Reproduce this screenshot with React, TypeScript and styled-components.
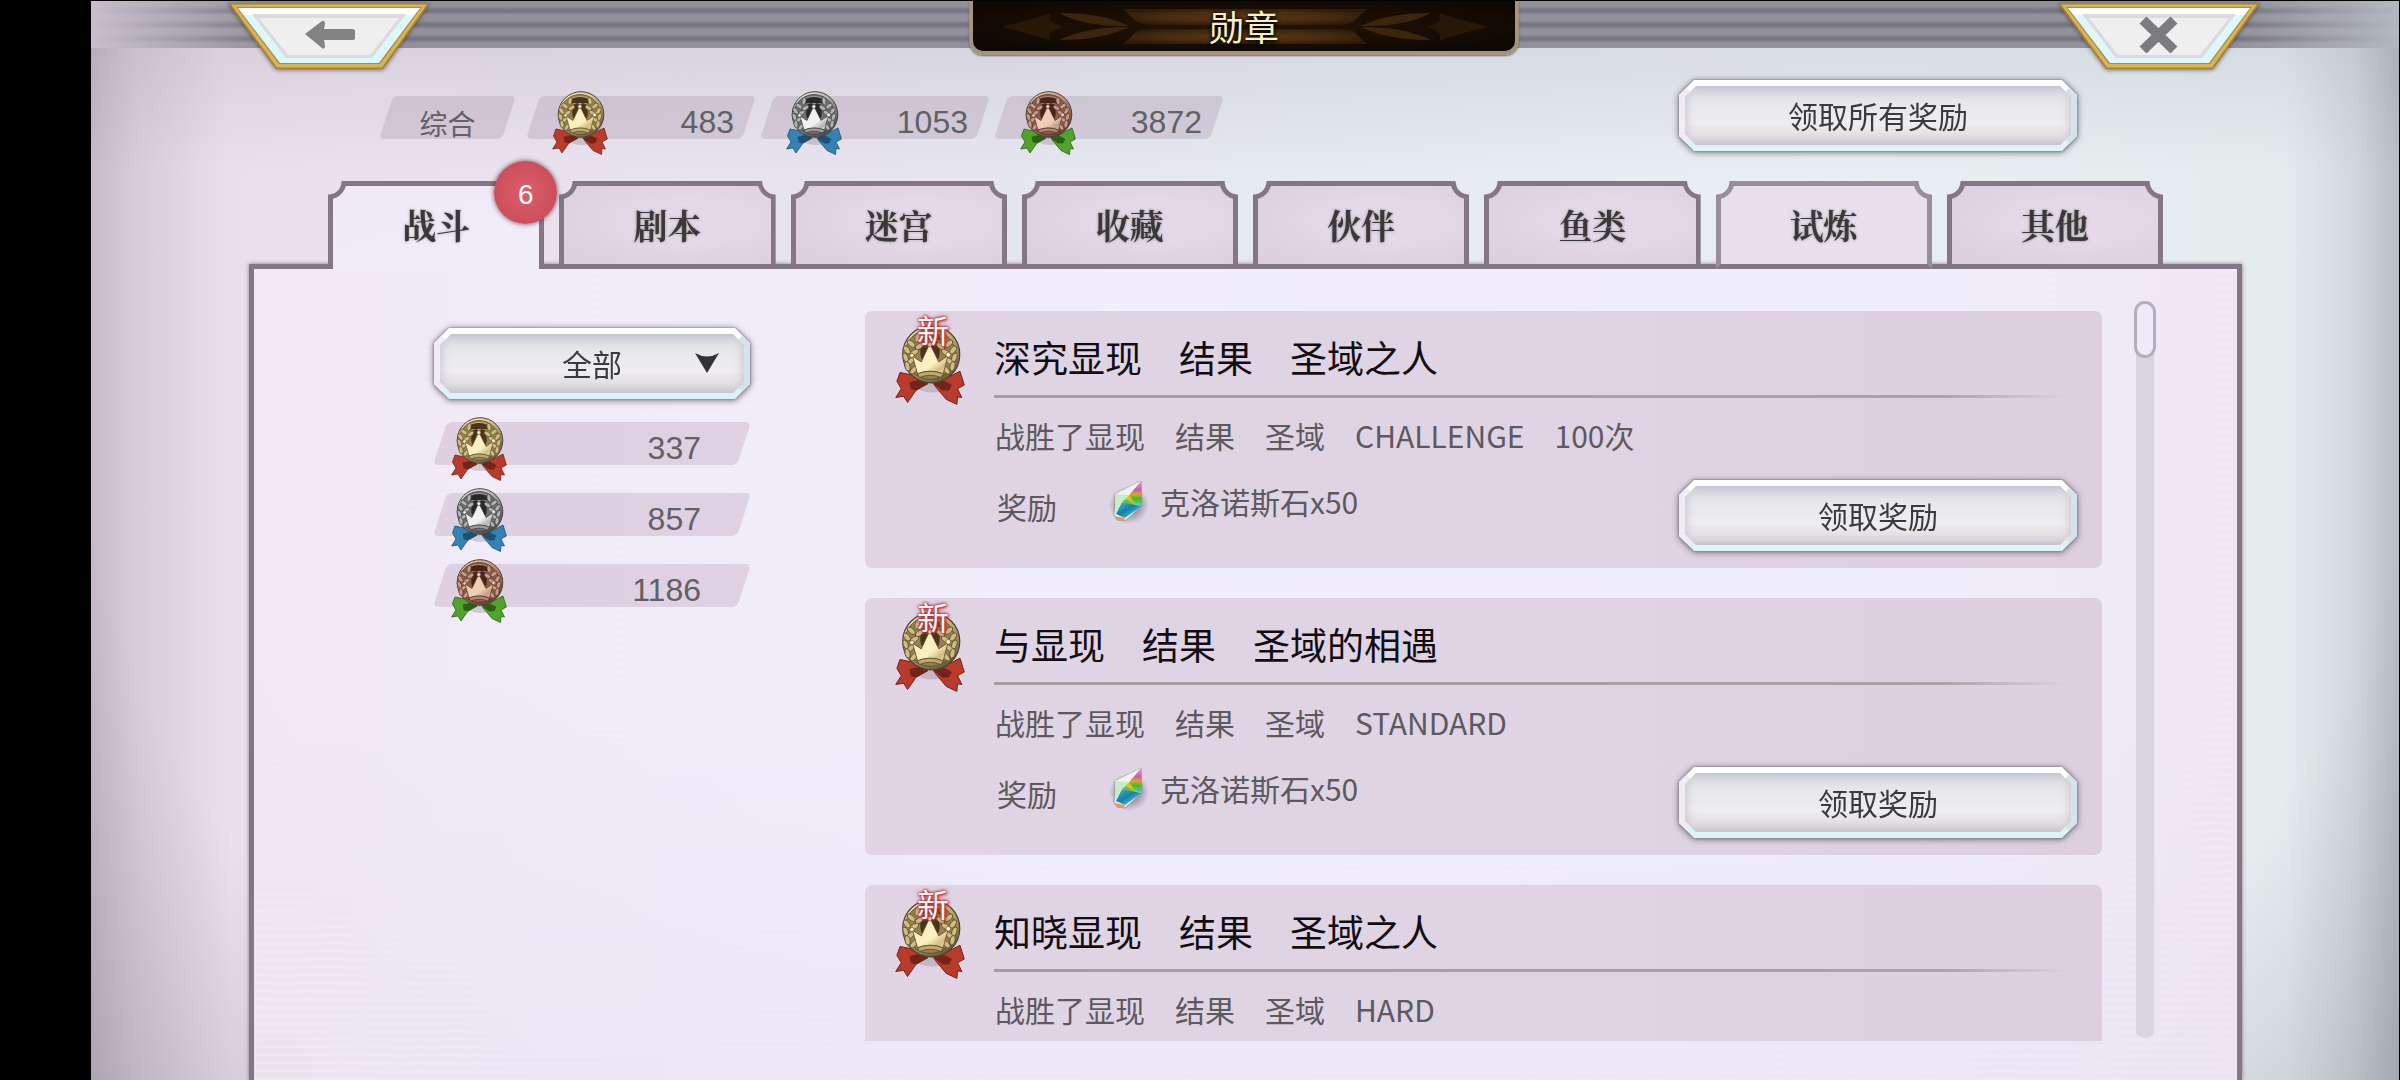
import React, { useState } from "react";
import styled, { createGlobalStyle, css } from "styled-components";

const sans = `"Noto Sans CJK SC", "Noto Sans", sans-serif`;
const digits = `"Liberation Sans", "Noto Sans CJK SC", sans-serif`;
const serif = `"Noto Serif CJK SC", "Noto Sans CJK SC", serif`;

const line = "#857686";

const GlobalStyle = createGlobalStyle`
  * { box-sizing: border-box; }
  html, body, #root { height: 100%; margin: 0; }
  body { background: #000; overflow: hidden; font-family: ${sans}; }
  button, select { font: inherit; border: 0; padding: 0; margin: 0; background: none; color: inherit; cursor: pointer; }
  ul, h1, h2, p { margin: 0; padding: 0; list-style: none; font-weight: 400; }
`;

const Screen = styled.div`
  height: 100%;
  padding: 1px 1px 0 91px;
  background: #000;
`;

const Stage = styled.div`
  height: 100%;
  display: flex;
  flex-direction: column;
  background:
    linear-gradient(90deg, rgba(90, 76, 100, 0.24) 0%, rgba(90, 76, 100, 0.12) 2%, transparent 6%, transparent 95%, rgba(80, 86, 100, 0.12) 98%, rgba(80, 84, 100, 0.3) 100%),
    radial-gradient(ellipse 62% 110% at 50% 32%, transparent 82%, rgba(78, 72, 92, 0.3) 112%),
    linear-gradient(180deg, rgba(150, 148, 160, 0.2) 40px, transparent 170px),
    linear-gradient(90deg, #e8dde9 0%, #ebe1ed 10%, #e7e4ef 34%, #e5eaf1 52%, #e8eff2 76%, #e4ebed 100%);
`;

const TopBar = styled.header`
  flex: none;
  height: 47px;
  padding: 0 139px 0 137px;
  display: grid;
  grid-template-columns: 1fr auto 1fr;
  align-items: start;
  background:
    linear-gradient(90deg, rgba(203, 193, 207, 0.95) 0, rgba(203, 193, 207, 0) 8%, rgba(190, 195, 203, 0) 93%, rgba(180, 186, 196, 0.95) 100%),
    repeating-linear-gradient(180deg, #93919c 0, #93919c 5px, #777682 9px, #777682 11px, #93919c 14px);
`;

const NavButton = styled.button<{ $end?: boolean }>`
  justify-self: ${(p) => (p.$end ? "end" : "start")};
  margin-top: 1px;
  height: 70px;
  svg { display: block; filter: drop-shadow(0 1px 2px rgba(60, 55, 60, 0.7)); }
`;

const TitlePlaque = styled.div`
  position: relative;
  width: 550px;
  height: 54px;
  border: 4px solid #a59580;
  border-top: 0;
  border-radius: 0 0 14px 14px;
  background: radial-gradient(ellipse at center, #241405 0%, #120a03 70%, #0b0602 100%);
  box-shadow: 0 1px 2px rgba(70, 60, 60, 0.7);
  svg { position: absolute; inset: 0; width: 100%; height: 100%; }
`;

const Title = styled.h1`
  position: relative;
  text-align: center;
  font-size: 35px;
  line-height: 49px;
  color: #f7f0c4;
  text-shadow: 0 0 4px #000, 0 3px 4px #000;
`;

const SummaryRow = styled.div`
  flex: none;
  display: flex;
  align-items: flex-start;
  padding: 31px 321px 0 288px;
  height: 133px;
`;

const ChipGroup = styled.ul`
  display: flex;
  gap: 4px;
  margin: 17px auto 0 10px;
`;

const Chip = styled.li<{ $wide?: boolean }>`
  position: relative;
  z-index: 0;
  height: 43px;
  width: ${(p) => (p.$wide ? "100%" : "230px")};
  padding: 0 ${(p) => (p.$wide ? "50px" : "22px")} 0 ${(p) => (p.$wide ? "18px" : "26px")};
  display: flex;
  justify-content: space-between;
  font: 32px/52px ${digits};
  color: #616064;
  &::before {
    content: "";
    position: absolute;
    z-index: -1;
    inset: 0 7px;
    border-radius: 5px;
    transform: skewX(-18deg);
    background: ${(p) => (p.$wide ? "rgba(200, 178, 200, 0.45)" : "rgba(182, 162, 186, 0.4)")};
  }
  svg { display: block; margin-top: -5px; }
`;

const ChipLabel = styled(Chip).attrs({ as: "h2" })`
  width: 137px;
  margin-top: 17px;
  padding: 0;
  justify-content: center;
  font: 28px/54px ${sans};
`;

const bevel = css`
  position: relative;
  z-index: 0;
  height: 73px;
  filter: drop-shadow(0 0 1px #77727c) drop-shadow(0 1px 3px rgba(90, 82, 95, 0.8));
  font: 30px/73px ${sans};
  color: #3b3b3d;
  --cut: 15px;
  &::before, &::after {
    content: "";
    position: absolute;
    z-index: -1;
    clip-path: polygon(var(--cut) 0, calc(100% - var(--cut)) 0, 100% var(--cut), 100% calc(100% - var(--cut)), calc(100% - var(--cut)) 100%, var(--cut) 100%, 0 calc(100% - var(--cut)), 0 var(--cut));
  }
  &::before {
    inset: 1px;
    border: 15px solid;
    border-color: #fff #d6e4ea #dcf3f7 #f2edf5;
  }
  &::after {
    --cut: 11px;
    inset: 7px;
    background: linear-gradient(180deg, #d3d6df 0%, #e8e8eb 28%, #eeedef 65%, #e2dce2 88%, #dad2da 100%);
    box-shadow: inset 0 0 8px 2px rgba(165, 160, 175, 0.45);
  }
`;

const BevelButton = styled.button`
  ${bevel}
  flex: none;
  width: 400px;
  margin-left: auto;
`;

const FilterBox = styled.label`
  ${bevel}
  display: block;
  select {
    appearance: none;
    display: block;
    width: 100%;
    height: 73px;
    text-align: center;
    text-align-last: center;
    outline: 0;
  }
  svg { position: absolute; right: 32px; top: 26px; pointer-events: none; }
`;

const TabList = styled.div`
  flex: none;
  display: flex;
  gap: 15px;
  padding: 0 79px;
  margin: 0 157px -5px 158px;
  position: relative;
  z-index: 1;
`;

const TabSlot = styled.div`
  flex: 1;
  position: relative;
`;

const Tab = styled.button<{ $active?: boolean; $soft?: boolean }>`
  --edge: ${(p) => (p.$soft ? "#998c9b" : line)};
  --corner: transparent 13px, var(--edge) 14px, var(--edge) 18px, transparent 19px;
  display: block;
  width: 100%;
  height: 88px;
  border: 5px solid var(--edge);
  border-bottom-color: ${line};
  ${(p) => p.$active && css`border-bottom: 0; padding-bottom: 5px;`}
  background:
    radial-gradient(circle at 0 0, var(--corner)) border-box,
    radial-gradient(circle at 100% 0, var(--corner)) border-box,
    ${(p) =>
      p.$active
        ? "linear-gradient(160deg, #f0e9f6, #f1edfb)"
        : p.$soft
        ? "#e7dfec"
        : "radial-gradient(ellipse at 60% 45%, #e3d9e8 30%, #dccddd 100%)"} padding-box;
  mask:
    radial-gradient(circle at 0 0, transparent 13px, #000 14px) 0 0 / 51% 100% no-repeat,
    radial-gradient(circle at 100% 0, transparent 13px, #000 14px) 100% 0 / 51% 100% no-repeat;
  font: 700 34px/78px ${serif};
  color: #3a383a;
  text-shadow: 0 0 3px rgba(95, 95, 80, 0.6);
`;

const Badge = styled.span`
  position: absolute;
  z-index: 1;
  top: -20px;
  right: -13px;
  width: 63px;
  height: 63px;
  border-radius: 50%;
  background: radial-gradient(circle, #dc5f6b 0%, #d0505e 60%, #bb4554 100%);
  box-shadow: 0 0 5px rgba(80, 40, 50, 0.85);
  color: #fff;
  text-align: center;
  font: 28px/67px ${digits};
`;

const Panel = styled.main`
  flex: 1;
  min-height: 0;
  margin: 0 157px 0 158px;
  padding: 32px 81px 39px 179px;
  display: flex;
  border: 5px solid ${line};
  border-bottom: 0;
  background:
    repeating-linear-gradient(180deg, rgba(255, 255, 255, 0.1) 0 4px, transparent 4px 8px),
    linear-gradient(180deg, transparent 50%, rgba(220, 215, 235, 0.25)),
    linear-gradient(90deg, #f0e8f1 0%, #f0eaf8 14%, #f2edfc 45%, #f0ecfb 85%, #efe6f2 100%);
  box-shadow: 0 0 4px rgba(110, 98, 115, 0.8);
`;

const Sidebar = styled.aside`
  flex: none;
  width: 318px;
  padding-top: 26px;
  margin-right: 114px;
`;

const CountList = styled.ul`
  display: grid;
  gap: 28px;
  margin-top: 22px;
`;

const CardList = styled.ul`
  flex: 1;
  min-width: 0;
  padding-top: 10px;
  overflow: hidden;
`;

const Card = styled.li`
  display: flex;
  gap: 29px;
  height: 257px;
  margin-bottom: 30px;
  padding: 0 24px 0 30px;
  border-radius: 7px;
  background: linear-gradient(90deg, #e0d4e5, #dfd4e3 60%, #dcd0e0);
`;

const CardMedal = styled.div`
  position: relative;
  flex: none;
  width: 70px;
  padding-top: 14px;
  svg { display: block; }
`;

const NewMark = styled.span`
  position: absolute;
  top: 0;
  left: 22px;
  font-size: 32px;
  line-height: 36px;
  color: #fff3f0;
  text-shadow: 0 0 2px #b5303a, 0 0 3px #b5303a, 1px 1px 3px #b5303a, 0 0 5px #c8505a;
`;

const CardBody = styled.div`
  flex: 1;
  min-width: 0;
`;

const CardTitle = styled.h2`
  padding-top: 8px;
  font-size: 37px;
  line-height: 76px;
  color: #120d12;
  white-space: pre;
`;

const Divider = styled.div`
  height: 3px;
  margin-right: 12px;
  background: linear-gradient(90deg, #a79da2 0%, #aaa0a6 88%, transparent 100%);
`;

const CardText = styled.p`
  margin-top: 16px;
  padding-left: 1px;
  font-size: 30px;
  line-height: 42px;
  color: #5d5960;
  white-space: pre;
`;

const Reward = styled.div`
  display: flex;
  align-items: flex-start;
  margin-top: 23px;
  font-size: 30px;
  line-height: 54px;
  color: #5d5960;
`;

const RewardLabel = styled.span`
  width: 116px;
  padding-left: 3px;
`;

const RewardItem = styled.span`
  display: flex;
  align-items: center;
  gap: 14px;
  line-height: 44px;
`;

const ScrollTrack = styled.div`
  flex: none;
  width: 22px;
  margin: 0 0 3px 32px;
  background: linear-gradient(#d8d5e0, #d8d5e0) center / 18px 100% no-repeat;
  border-radius: 11px;
`;

const ScrollThumb = styled.div`
  height: 57px;
  border: 3px solid #b3aebb;
  border-radius: 11px;
  background: #eeeafa;
`;

type Tone = "gold" | "silver" | "bronze";

type Palette = { hi: string; base: string; inner: string; low: string; dark: string; leaf: string; ribbon: string; fold: string };

const tones: Record<Tone, Palette> = {
  gold: { hi: "#fdf0c0", base: "#bfa970", inner: "#988150", low: "#5f5030", dark: "#49331a", leaf: "#cfbd82", ribbon: "#b83b2b", fold: "#74231a" },
  silver: { hi: "#f2f2f2", base: "#9b9b9b", inner: "#6f6f71", low: "#3f3f41", dark: "#29292b", leaf: "#b4b4b6", ribbon: "#3482b6", fold: "#1d5072" },
  bronze: { hi: "#f1cdb8", base: "#b38570", inner: "#8d5d4c", low: "#55352a", dark: "#47251b", leaf: "#c89b87", ribbon: "#52a32c", fold: "#2b6115" },
};

const leaves: [number, number, number][] = [
  [18, 10, 10], [13, 15, -50], [19.5, 17, 55], [9.5, 20, -35], [15.5, 22, 60], [8.5, 26, -20],
  [12.5, 29, 50], [10, 33, -10], [15, 36, 40],
];

function Medal({ tone, width }: { tone: Tone; width: number }) {
  const t = tones[tone];
  const id = `medal-${tone}`;
  return (
    <svg width={width} height={Math.round((width * 64) / 56)} viewBox="0 0 56 64" aria-hidden="true">
      <defs>
        <linearGradient id={id} x1="0.2" y1="0" x2="0.8" y2="1">
          <stop offset="0" stopColor={t.hi} />
          <stop offset="0.45" stopColor={t.base} />
          <stop offset="1" stopColor={t.low} />
        </linearGradient>
        <linearGradient id={`${id}-crown`} x1="0" y1="0" x2="1" y2="1">
          <stop offset="0" stopColor={t.hi} />
          <stop offset="0.6" stopColor={t.hi} />
          <stop offset="0.8" stopColor={t.leaf} />
          <stop offset="1" stopColor={t.hi} />
        </linearGradient>
      </defs>
      <ellipse cx="30" cy="48" rx="14" ry="6" fill="#5a5060" opacity="0.22" />
      <g stroke={t.fold} strokeWidth="0.8" strokeLinejoin="round">
        <path d="M4 38 14 40 26 47 17 52 10 62 7 57 0.6 58 5 51 1.5 45Z" fill={t.ribbon} />
        <path d="M31 47 42 42 52 37 55.4 48 50 51 53.5 58 50 57.5 49.5 63.5 41 59.5 33 50Z" fill={t.ribbon} />
        <path d="M12 46 21 44 26 47 17 52 13 51Z M31 47 37 44 45 48 43 52 38 52Z" fill={t.fold} />
      </g>
      <circle cx="29" cy="23.5" r="22.8" fill={`url(#${id})`} stroke="#4a4238" strokeWidth="1" />
      <circle cx="28" cy="23.5" r="20" fill={t.inner} stroke={t.low} strokeWidth="0.8" />
      <path d="M15 9Q28 1 41 9L38 13H18Z" fill={t.base} />
      <path d="M19 8Q28 4 37 8L38 13 33 12H23L18 13Z" fill={t.dark} />
      <path d="M22 13Q19 20 21 27H35Q37 20 34 13L30 12 28 16 26 12Z" fill={t.dark} />
      <g fill={t.leaf} stroke={t.low} strokeWidth="0.7">
        {leaves.map(([x, y, a]) => (
          <ellipse key={`${x}-${y}`} cx={x} cy={y} rx="2" ry="3.8" transform={`rotate(${a} ${x} ${y})`} />
        ))}
        {leaves.map(([x, y, a]) => (
          <ellipse key={`${x}-${y}`} cx={56 - x} cy={y} rx="2" ry="3.8" transform={`rotate(${-a} ${56 - x} ${y})`} />
        ))}
      </g>
      <path
        d="M14 25 21 29.500 26.800 17 28.800 17 35 29.500 42.500 24.500 38.500 39Q28 35 18 39Z"
        fill={`url(#${id}-crown)`}
        stroke={t.low}
        strokeWidth="0.7"
      />
      <path d="M18 39Q28 35 38.500 39L37 42Q28 38.500 19.500 42Z" fill={t.base} stroke={t.low} strokeWidth="0.7" />
      <g fill={t.hi} stroke={t.low} strokeWidth="0.5">
        <circle cx="27.8" cy="15.6" r="1.9" />
        <circle cx="13.5" cy="24.4" r="1.7" />
        <circle cx="42.6" cy="23.8" r="1.9" />
      </g>
    </svg>
  );
}

const GemDrawing = styled.svg`
  overflow: visible;
`;

function Gem() {
  return (
    <GemDrawing width="36" height="42" viewBox="0 0 32 42" aria-hidden="true">
      <defs>
        <radialGradient id="gem-glow">
          <stop offset="0.5" stopColor="#5a5568" stopOpacity="0.5" />
          <stop offset="1" stopColor="#5a5568" stopOpacity="0" />
        </radialGradient>
        <linearGradient id="gem-right" x1="0" y1="0" x2="0" y2="1">
          <stop offset="0" stopColor="#f09be0" />
          <stop offset="0.35" stopColor="#cf5cae" />
          <stop offset="0.52" stopColor="#e3a030" />
          <stop offset="0.7" stopColor="#3fc022" />
          <stop offset="1" stopColor="#4fd0b0" />
        </linearGradient>
        <linearGradient id="gem-low" x1="0" y1="0" x2="1" y2="1">
          <stop offset="0" stopColor="#4fc0b8" />
          <stop offset="0.45" stopColor="#147fa8" />
          <stop offset="1" stopColor="#8fe4ea" />
        </linearGradient>
      </defs>
      <ellipse cx="17" cy="25" rx="20" ry="19" fill="url(#gem-glow)" />
      <path d="M3 14 29 1 30 26 13 41 5 40 2 35Z" fill="#dff5ee" stroke="#8c8794" strokeWidth="0.8" />
      <path d="M29 1 30 26 22 24 17 15Z" fill="url(#gem-right)" />
      <path d="M17 15 24 25 10 22Z" fill="#d9c02c" />
      <path d="M14 19 24 25 10 22Z" fill="#62c440" />
      <path d="M10 22 24 25 30 26 13 38 4 34Z" fill="url(#gem-low)" />
      <path d="M3 14 17 15 10 22 3 33Z" fill="#c9ecc8" />
      <path d="M3 14 29 1 17 15Z" fill="#f1f3ee" />
      <path d="M3 36 13 38 12 41 5 40Z" fill="#e39a6a" />
    </GemDrawing>
  );
}

function NavShape({ children }: { children: React.ReactNode }) {
  return (
    <svg width="202" height="68" viewBox="0 0 202 68" aria-hidden="true">
      <path d="M0 0H202L155 66H48Z" fill="#a9822f" />
      <path d="M3 1.500H199L154 64.500H49Z" fill="#d6b45c" />
      <path d="M8 4H194L152 61H51Z" fill="#b08a38" />
      <path d="M10 5H192L151 60H52Z" fill="#dcf8fb" />
      <path d="M10 5H192L186 12H16Z" fill="#fff" />
      <path d="M24 11H178L144 55H58Z" fill="#dcdadf" />
      <path d="M31 15H171L142 52H60Z" fill="#efeff0" />
      {children}
    </svg>
  );
}

function PlaqueMotif() {
  return (
    <svg viewBox="0 0 542 50" preserveAspectRatio="none" aria-hidden="true">
      <defs>
        <radialGradient id="plaque-glow" cx="0.5" cy="0.5" r="0.6">
          <stop offset="0" stopColor="#5c3a16" />
          <stop offset="0.6" stopColor="#452a0f" />
          <stop offset="1" stopColor="#2c1908" />
        </radialGradient>
      </defs>
      <g fill="url(#plaque-glow)">
        <path d="M150 8H394L380 21Q374 24 368 24H176Q170 24 164 21Z" />
        <path d="M150 43H394L380 30Q374 28 368 28H176Q170 28 164 30Z" />
      </g>
      <g fill="#3d250d">
        <path d="M86 12Q130 12 156 25Q112 26 86 12Z M86 39Q130 39 156 26Q112 26 86 39Z" />
        <path d="M458 12Q414 12 388 25Q432 26 458 12Z M458 39Q414 39 388 26Q432 26 458 39Z" />
      </g>
      <g fill="#271707">
        <path d="M28 26Q60 18 78 12Q72 22 92 26Q72 30 78 40Q60 33 28 26Z" />
        <path d="M516 26Q484 18 466 12Q472 22 452 26Q472 30 466 40Q484 33 516 26Z" />
      </g>
    </svg>
  );
}

const totals: [Tone, number][] = [["gold", 483], ["silver", 1053], ["bronze", 3872]];
const counts: [Tone, number][] = [["gold", 337], ["silver", 857], ["bronze", 1186]];
const tabs = ["战斗", "剧本", "迷宫", "收藏", "伙伴", "鱼类", "试炼", "其他"];
const medals: { title: string; text: string; reward?: string }[] = [
  { title: "深究显现　结果　圣域之人", text: "战胜了显现　结果　圣域　CHALLENGE　100次", reward: "克洛诺斯石x50" },
  { title: "与显现　结果　圣域的相遇", text: "战胜了显现　结果　圣域　STANDARD", reward: "克洛诺斯石x50" },
  { title: "知晓显现　结果　圣域之人", text: "战胜了显现　结果　圣域　HARD" },
];

export default function App() {
  const [active, setActive] = useState(0);
  return (
    <Screen>
      <GlobalStyle />
      <Stage>
        <TopBar>
          <NavButton aria-label="返回">
            <NavShape>
              <path d="M77 31 94 18Q97 17 97 21L96 26H124Q127 26 127 28V35Q127 37 124 37H96L97 43Q97 47 94 45Z" fill="#838386" />
            </NavShape>
          </NavButton>
          <TitlePlaque>
            <PlaqueMotif />
            <Title>勋章</Title>
          </TitlePlaque>
          <NavButton $end aria-label="关闭">
            <NavShape>
              <path d="M85 17 116 47M116 17 85 47" stroke="#7c7c80" strokeWidth="10" />
            </NavShape>
          </NavButton>
        </TopBar>

        <SummaryRow>
          <ChipLabel>综合</ChipLabel>
          <ChipGroup>
            {totals.map(([tone, n]) => (
              <Chip key={tone}>
                <Medal tone={tone} width={56} />
                {n}
              </Chip>
            ))}
          </ChipGroup>
          <BevelButton>领取所有奖励</BevelButton>
        </SummaryRow>

        <TabList role="tablist">
          {tabs.map((name, i) => (
            <TabSlot key={name}>
              <Tab role="tab" aria-selected={i === active} $active={i === active} $soft={i === 6} onClick={() => setActive(i)}>
                {name}
              </Tab>
              {i === 0 && <Badge>6</Badge>}
            </TabSlot>
          ))}
        </TabList>

        <Panel>
          <Sidebar>
            <FilterBox>
              <select aria-label="筛选" defaultValue="all">
                <option value="all">全部</option>
              </select>
              <svg width="24" height="20" viewBox="0 0 24 20" aria-hidden="true">
                <path d="M0 0Q12 7 24 0L12 20Z" fill="#333336" />
              </svg>
            </FilterBox>
            <CountList>
              {counts.map(([tone, n]) => (
                <Chip key={tone} $wide>
                  <Medal tone={tone} width={56} />
                  {n}
                </Chip>
              ))}
            </CountList>
          </Sidebar>

          <CardList>
            {medals.map((m) => (
              <Card key={m.title}>
                <CardMedal>
                  <Medal tone="gold" width={70} />
                  <NewMark>新</NewMark>
                </CardMedal>
                <CardBody>
                  <CardTitle>{m.title}</CardTitle>
                  <Divider />
                  <CardText>{m.text}</CardText>
                  {m.reward && (
                    <Reward>
                      <RewardLabel>奖励</RewardLabel>
                      <RewardItem>
                        <Gem />
                        {m.reward}
                      </RewardItem>
                      <BevelButton>领取奖励</BevelButton>
                    </Reward>
                  )}
                </CardBody>
              </Card>
            ))}
          </CardList>

          <ScrollTrack>
            <ScrollThumb />
          </ScrollTrack>
        </Panel>
      </Stage>
    </Screen>
  );
}
